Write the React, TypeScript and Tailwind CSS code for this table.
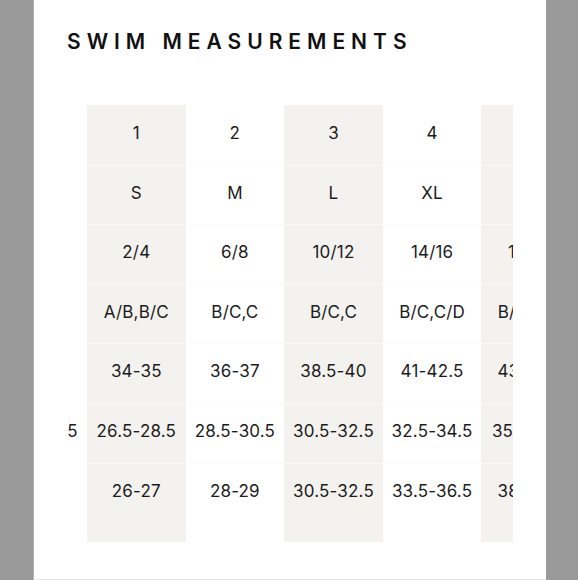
import React from "react";

const columns = [
  ["1", "S", "2/4", "A/B,B/C", "34-35", "26.5-28.5", "26-27"],
  ["2", "M", "6/8", "B/C,C", "36-37", "28.5-30.5", "28-29"],
  ["3", "L", "10/12", "B/C,C", "38.5-40", "30.5-32.5", "30.5-32.5"],
  ["4", "XL", "14/16", "B/C,C/D", "41-42.5", "32.5-34.5", "33.5-36.5"],
  ["5", "XXL", "18/20", "B/C,C/D", "43.5-45", "35.5-37.5", "38-40.5"],
];

const labels = ["", "", "", "", "", "5", ""];

const App = () => {
  return (
    <div className="w-[578px] h-[580px] bg-[#999999] overflow-hidden" style={{ fontFamily: "Inter, 'Liberation Sans', sans-serif" }}>
      <div className="ml-[33px] w-[513px] h-[580px] bg-white border-l border-[#b3b3b3] border-b border-b-[#e6e6e6]">
        <h1 className="pl-[33px] pt-[29px] text-[21px] leading-[25px] font-semibold tracking-[0.285em] text-[#111]">
          SWIM MEASUREMENTS
        </h1>

        <div className="mt-[51px] ml-[26px] w-[453px] overflow-hidden flex text-[17px] tracking-[0.01em] text-[#1c1c1c]">
          <div className="w-[27px] shrink-0 flex flex-col">
            {labels.map((l, i) => (
              <div key={i} className="h-[59.6px] flex items-center justify-center pb-[3px] pr-[2px]">{l}</div>
            ))}
          </div>
          {columns.map((col, ci) => (
            <div key={ci} className={`w-[98.6px] shrink-0 flex flex-col pb-5 ${ci % 2 === 0 ? "bg-[#f4f2ee]" : "bg-white"}`}>
              {col.map((v, ri) => (
                <div key={ri} className={`h-[59.6px] flex items-center justify-center pb-[3px] whitespace-nowrap ${ri > 0 ? "border-t border-[#fbfaf8]" : ""}`}>
                  {v}
                </div>
              ))}
            </div>
          ))}
        </div>
      </div>
    </div>
  );
};

export default App;
